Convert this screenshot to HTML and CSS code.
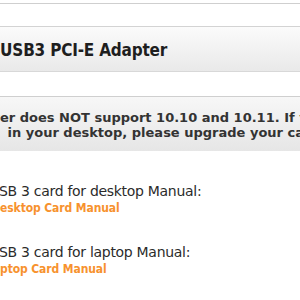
FILE: index.html
```html
<!DOCTYPE html>
<html>
<head>
<meta charset="utf-8">
<link rel="stylesheet" href="styles.css">
</head>
<body>
<div class="page">
  <div class="top-rule"></div>
  <div class="title-bar"><h1 class="title"><span class="cut cut-title">Kingwin</span> USB3 PCI-E Adapter</h1></div>
  <div class="notice">
    <span class="notice-line"><span class="cut cut-n1">driv</span>er does NOT support 10.10 and 10.11. If you</span>
    <span class="notice-line"><span class="cut cut-n2">installed</span> in your desktop, please upgrade your card</span>
  </div>
  <div class="manual manual-desktop">
    <p class="manual-label"><span class="cut cut-l1">U</span>SB 3 card for desktop Manual:</p>
    <a class="manual-link"><span class="cut cut-k1">D</span>esktop Card Manual</a>
  </div>
  <div class="manual manual-laptop">
    <p class="manual-label"><span class="cut cut-l1">U</span>SB 3 card for laptop Manual:</p>
    <a class="manual-link"><span class="cut cut-k2">La</span>ptop Card Manual</a>
  </div>
</div>
</body>
</html>
```
FILE: styles.css
```css
html, body {
  margin: 0;
  padding: 0;
  background: #fff;
  overflow: hidden;
  width: 300px;
  height: 300px;
}
.page {
  font-family: "DejaVu Sans", "Liberation Sans", sans-serif;
  color: #2b2b2b;
  padding-top: 3px;
}
.cut {
  display: inline-block;
  text-align: right;
  white-space: nowrap;
}
.top-rule {
  border-top: 1px solid #cfcfcf;
  height: 22px;
}
.title-bar {
  border-top: 1px solid #d3d3d3;
  border-bottom: 1px solid #d8d8d8;
  background: linear-gradient(#fbfbfb, #e9e9e9);
  height: 44px;
  display: flex;
  align-items: center;
  overflow: hidden;
  white-space: nowrap;
}
.title {
  margin: 1px 0 0;
  font-family: "DejaVu Sans Condensed", "DejaVu Sans", sans-serif;
  font-stretch: condensed;
  font-size: 17px;
  letter-spacing: -0.2px;
  font-weight: bold;
  color: #1e1e1e;
}
.cut-title {
  width: 80px;
  margin-left: -85px;
}
.notice {
  margin-top: 24px;
  border-top: 1px solid #cfcfcf;
  background: linear-gradient(#f7f7f7, #e6e6e6);
  height: 55px;
  box-sizing: border-box;
  padding-top: 13px;
  font-size: 13px;
  font-weight: bold;
  line-height: 15px;
  color: #333;
  white-space: nowrap;
  overflow: hidden;
}
.notice-line {
  display: block;
}
.cut-n1 {
  width: 40px;
  margin-left: -40px;
}
.cut-n2 {
  width: 80px;
  margin-left: -81px;
  margin-right: 4px;
}
.manual {
  white-space: nowrap;
}
.manual-label {
  margin: 0;
  font-size: 14px;
  line-height: 18px;
  letter-spacing: -0.3px;
  color: #2b2b2b;
}
.manual-desktop .manual-label {
  margin-top: 31px;
}
.manual-laptop .manual-label {
  margin-top: 27px;
}
.cut-l1 {
  width: 20px;
  margin-left: -21px;
}
.manual-link {
  display: block;
  font-family: "DejaVu Sans Condensed", "DejaVu Sans", sans-serif;
  font-stretch: condensed;
  font-size: 12px;
  letter-spacing: -0.1px;
  font-weight: bold;
  line-height: 16px;
  color: #f7922e;
}
.cut-k1 {
  width: 20px;
  margin-left: -20px;
}
.cut-k2 {
  width: 30px;
  margin-left: -30px;
}
```
